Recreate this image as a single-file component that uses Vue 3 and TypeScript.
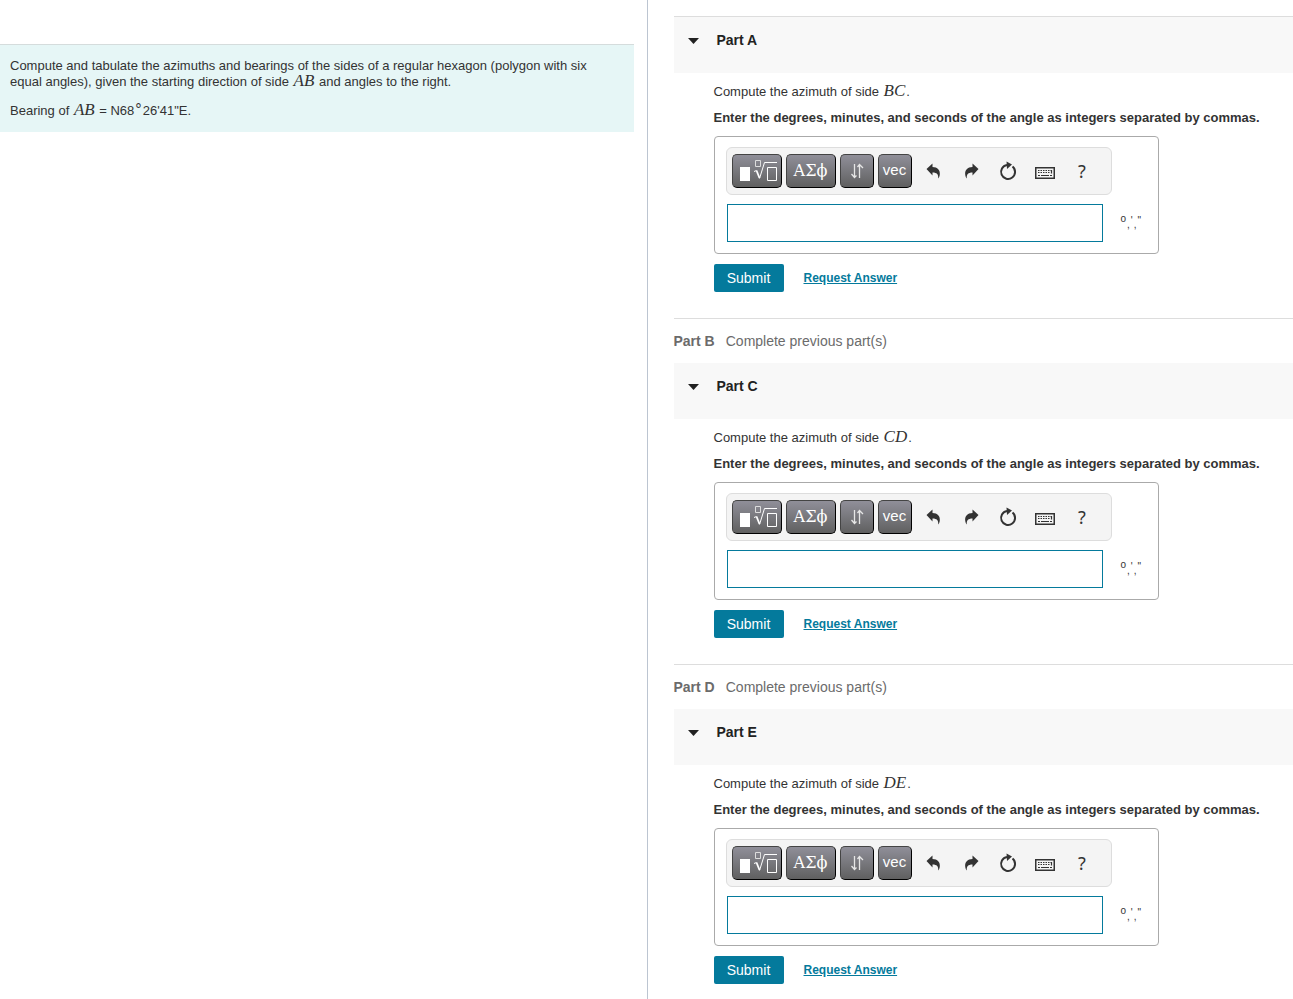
<script setup lang="ts">
interface Part {
  id: string
  side: string
  next?: string
}

const parts: Part[] = [
  { id: 'A', side: 'BC', next: 'B' },
  { id: 'C', side: 'CD', next: 'D' },
  { id: 'E', side: 'DE' },
]
</script>

<template>
  <div class="page">
    <aside class="problem">
      <div class="intro">
        <p>Compute and tabulate the azimuths and bearings of the sides of a regular hexagon (polygon with six equal angles), given the starting direction of side <i class="math">AB</i> and angles to the right.</p>
        <p>Bearing of <i class="math">AB</i> = N68<span class="degree">°</span>26'41"E.</p>
      </div>
    </aside>
    <main class="parts">
      <template v-for="part in parts" :key="part.id">
        <section class="part">
          <header class="part-header">
            <svg class="caret" width="12" height="6" viewBox="0 0 12 6"><path d="M0 0h11L5.500 6z" fill="#222" /></svg>
            <h2>Part {{ part.id }}</h2>
          </header>
          <div class="part-body">
            <p class="question">Compute the azimuth of side <i class="math">{{ part.side }}</i>.</p>
            <label class="hint" :for="'answer-' + part.id">Enter the degrees, minutes, and seconds of the angle as integers separated by commas.</label>
            <div class="answer-box">
              <div class="toolbar">
                <button type="button" class="tool wide" aria-label="Templates">
                  <svg width="42" height="24" viewBox="0 0 42 24" fill="none" stroke="#fff">
                    <path d="M4 8h10v14H4z" fill="#fff" stroke="none" />
                    <path d="M19.500 1.500h5v6h-5z" stroke="#ddd" />
                    <path d="M18 12.500l2.500-1" />
                    <path d="M20.500 11.500l3 7.500" stroke-width="1.800" />
                    <path d="M23.500 19.500L28.500 3.500H41" />
                    <path d="M31.500 8.500h9v13h-9z" />
                  </svg>
                </button>
                <button type="button" class="tool wide greek">ΑΣϕ</button>
                <button type="button" class="tool" aria-label="Subscripts and arrows">
                  <svg width="14" height="16" viewBox="0 0 14 16" fill="none" stroke="#e6e6e6" stroke-width="1.300">
                    <path d="M4.500 1v13M1.500 11l3 3.500L6.500 12.500M9.500 15V2M7.500 4l2-2.500L13 5" />
                  </svg>
                </button>
                <button type="button" class="tool vec">vec</button>
                <div class="actions">
                  <button type="button" aria-label="Undo">
                    <svg width="16" height="16" viewBox="0 0 16 16"><path d="M.5 6L6.500.5V4c5 .2 7.800 3 7.300 7.500-.1 1.500-.7 3-1.600 4 .4-4-1.200-6-5.700-6v3z" fill="#333" /></svg>
                  </button>
                  <button type="button" aria-label="Redo">
                    <svg width="16" height="16" viewBox="0 0 16 16"><path d="M15.500 6L9.500.5V4C4.500 4.200 1.700 7 2.200 11.500c.1 1.500.7 3 1.600 4-.4-4 1.200-6 5.700-6v3z" fill="#333" /></svg>
                  </button>
                  <button type="button" aria-label="Reset">
                    <svg width="18" height="20" viewBox="0 0 18 20"><path d="M8 4A7 7 0 1 0 13.500 5.500" fill="none" stroke="#333" stroke-width="2" /><path d="M7.500.5L13 3.500 8 8z" fill="#333" /></svg>
                  </button>
                  <button type="button" aria-label="Keyboard shortcuts">
                    <svg class="keyboard" width="20" height="12" viewBox="0 0 20 12" fill="none" stroke="#333">
                      <path d="M.75.750h18.500v10.500H.75z" stroke-width="1.500" />
                      <path d="M3 3.500h14M3 5.500h12" stroke-dasharray="1.500 1" />
                      <path d="M3 8.500h2M6 8.500h8M15 8.500h2M16.500 3v3.500" stroke-width="1.200" />
                    </svg>
                  </button>
                  <button type="button" class="help">?</button>
                </div>
              </div>
              <div class="entry">
                <input :id="'answer-' + part.id" type="text" autocomplete="off" />
                <span class="units"><span class="ring">o</span><span class="sep">,</span><span>'</span><span class="sep">,</span><span>"</span></span>
              </div>
            </div>
            <div class="submit-row">
              <button type="button" class="submit">Submit</button>
              <a href="#">Request Answer</a>
            </div>
          </div>
        </section>
        <div v-if="part.next" class="locked"><strong>Part {{ part.next }}</strong><span>Complete previous part(s)</span></div>
      </template>
    </main>
  </div>
</template>

<style>
body {
  margin: 0;
  background: #fff;
}
</style>

<style scoped>
.page {
  display: grid;
  grid-template-columns: calc(50% + 1px) 1fr;
  min-height: 100vh;
  box-sizing: border-box;
  font-family: "Liberation Sans", Arial, sans-serif;
  font-size: 13px;
  line-height: 16px;
  color: #333;
}
p, h2 {
  margin: 0;
}
.problem {
  border-right: 1px solid #bcc5d1;
  padding: 44px 13px 0 0;
}
.intro {
  background: #e6f6f6;
  border-top: 1px solid #d5dcdc;
  padding: 13px 40px 13px 10px;
}
.intro p + p {
  margin-top: 13px;
}
.math {
  padding: 0 1px;
  font-family: "Liberation Serif", "Times New Roman", serif;
  font-size: 17px;
  line-height: 12px;
}
.degree {
  padding: 0 1px;
  font-size: 16px;
  line-height: 12px;
}
.parts {
  padding: 16px 0 0 26px;
  height: 100vh;
  box-sizing: border-box;
  overflow: hidden;
}
.part:first-child {
  border-top: 1px solid #ddd;
}
.part-header {
  display: flex;
  box-sizing: border-box;
  height: 56px;
  background: #f8f8f8;
  padding: 15px 13px 0 14px;
}
.caret {
  margin: 6px 17px 0 0;
}
h2 {
  font-size: 14px;
  line-height: 16px;
  color: #222;
}
.part-body {
  padding: 11px 0 26px 40px;
}
.question {
  margin-bottom: 10px;
}
.hint {
  display: block;
  font-weight: bold;
  white-space: nowrap;
}
.answer-box {
  width: 445px;
  box-sizing: border-box;
  margin-top: 10px;
  padding: 10px 11px 11px;
  border: 1px solid #aaa;
  border-radius: 4px;
}
.toolbar {
  display: flex;
  align-items: center;
  gap: 4px;
  width: 386px;
  height: 48px;
  box-sizing: border-box;
  padding: 0 5px;
  background: #f4f4f4;
  border: 1px solid #ddd;
  border-radius: 6px;
}
.tool {
  display: flex;
  align-items: center;
  justify-content: center;
  width: 34px;
  height: 34px;
  box-sizing: border-box;
  padding: 0;
  border: 1px solid #000;
  border-top-color: #444;
  border-left-color: #444;
  border-radius: 5px;
  background: linear-gradient(#908f99, #606060);
  color: #fff;
}
.wide {
  width: 50px;
}
.greek {
  padding-bottom: 2px;
  font-family: "DejaVu Serif", "Liberation Serif", serif;
  font-size: 16px;
}
.vec {
  padding-bottom: 3px;
  font-family: "Liberation Sans", Arial, sans-serif;
  font-size: 15px;
}
.actions {
  display: flex;
}
.actions button {
  display: flex;
  align-items: center;
  justify-content: center;
  width: 37px;
  height: 34px;
  padding: 0;
  border: 0;
  background: none;
  color: #333;
}
.actions .help {
  font-family: "Noto Sans", sans-serif;
  font-size: 18px;
}
.keyboard {
  margin-top: 4px;
}
.entry {
  display: flex;
  align-items: center;
  margin-top: 9px;
}
.entry input {
  width: 376px;
  height: 38px;
  box-sizing: border-box;
  margin: 0 18px 0 1px;
  padding: 0 8px;
  border: 1px solid #047a9c;
  border-radius: 0;
  background: #fff;
  font: inherit;
  outline: none;
}
.units {
  display: flex;
  gap: 1px;
  height: 16px;
  font-size: 10px;
  line-height: 12px;
  color: #333;
}
.ring {
  line-height: 8px;
}
.sep {
  align-self: flex-end;
}
.submit-row {
  display: flex;
  align-items: center;
  gap: 20px;
  margin-top: 10px;
}
.submit {
  width: 70px;
  height: 28px;
  padding: 0;
  border: 0;
  border-radius: 2px;
  background: #047a9c;
  color: #fff;
  font-family: "Liberation Sans", Arial, sans-serif;
  font-size: 14px;
}
.submit-row a {
  font-size: 12px;
  font-weight: bold;
  color: #047a9c;
}
.locked {
  display: flex;
  align-items: center;
  gap: 11px;
  height: 44px;
  border-top: 1px solid #ddd;
  font-size: 14px;
  color: #6b6b6b;
}
</style>
